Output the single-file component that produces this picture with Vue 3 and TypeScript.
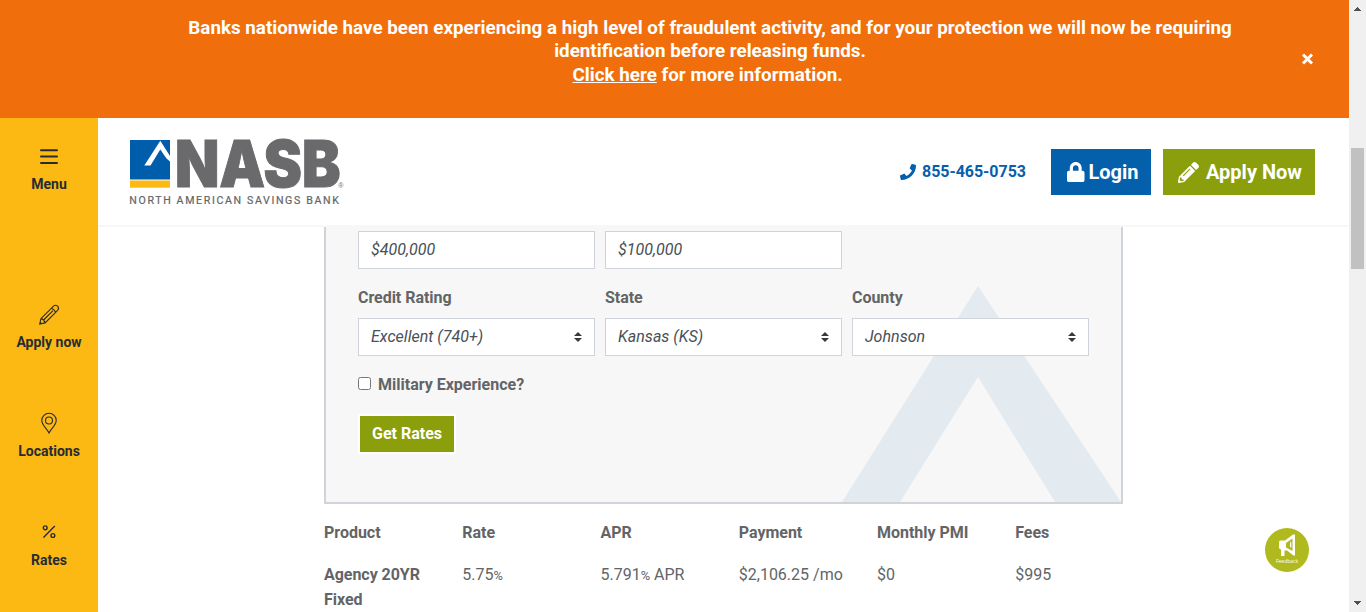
<script setup lang="ts">
interface Field {
  label: string
  value: string
}

const amounts: Field[] = [
  { label: 'Purchase price', value: '$400,000' },
  { label: 'Down payment', value: '$100,000' },
]
const selects: Field[] = [
  { label: 'Credit Rating', value: 'Excellent (740+)' },
  { label: 'State', value: 'Kansas (KS)' },
  { label: 'County', value: 'Johnson' },
]
const headings: string[] = ['Product', 'Rate', 'APR', 'Payment', 'Monthly PMI', 'Fees']
</script>

<template>
  <div class="page">
    <div class="window">
      <div class="alert">
        <p class="alert-text">
          Banks nationwide have been experiencing a high level of fraudulent activity, and for your protection we will now be requiring<br />
          identification before releasing funds.<br />
          <a class="alert-link">Click here</a> for more information.<span class="tail">&nbsp;</span>
        </p>
        <svg class="close" viewBox="0 0 12 12"><path d="M1.500 1.500L10.500 10.500M10.500 1.500L1.500 10.500" /></svg>
      </div>
      <div class="body">
        <nav class="side">
          <div class="nav-item menu">
            <svg class="nav-icon" viewBox="0 0 24 24"><path class="thick" d="M4 5.300H20M4 11.600H20M4 17.900H20" /></svg>
            <span>Menu</span>
          </div>
          <div class="nav-item">
            <svg class="nav-icon" viewBox="0 0 24 24">
              <path d="M2.700 21L3.900 15.700L16.300 3.300Q18.400 1.300 20.600 3.200Q22.500 5.300 20.600 7.400L8.100 19.900ZM14.400 5.200Q17.600 6.200 18.600 9.300M4 15.600Q7.200 16.300 8 19.700M6.600 17L16 7.600M2.900 19L4.500 20.600" />
            </svg>
            <span>Apply now</span>
          </div>
          <div class="nav-item">
            <svg class="nav-icon" viewBox="0 0 24 24">
              <path d="M12 20.900C10.200 17.200 4.800 13 4.800 8.500A7.200 7.200 0 0 1 19.200 8.500C19.200 13 13.800 17.200 12 20.900Z" />
              <circle cx="12" cy="8.500" r="3.500" />
            </svg>
            <span>Locations</span>
          </div>
          <div class="nav-item">
            <svg class="nav-icon" viewBox="0 0 24 24">
              <path class="medium" d="M6.500 16.500L17.800 5.100" />
              <circle class="medium" cx="8.200" cy="6.800" r="1.900" />
              <circle class="medium" cx="15.900" cy="14.500" r="1.900" />
            </svg>
            <span>Rates</span>
          </div>
        </nav>
        <div class="main">
          <header class="header">
            <svg class="logo" viewBox="0 0 220 70">
              <rect x="0" y="4" width="40" height="39.500" fill="#005dab" />
              <rect x="0" y="44.500" width="40" height="7.200" fill="#fdb913" />
              <path d="M14.300 29.600L30.300 4.800L40 20V25.600L36.500 22.500L30.300 13.500L20.500 29.600Z" fill="#fff" />
              <text class="logo-name" x="45" y="51" textLength="165.500" lengthAdjust="spacingAndGlyphs">NASB</text>
              <text class="logo-reg" x="208.300" y="51.500">®</text>
              <text class="logo-sub" x="-0.700" y="68" textLength="210.500" lengthAdjust="spacing">NORTH AMERICAN SAVINGS BANK</text>
            </svg>
            <div class="actions">
              <a class="phone">
                <svg class="phone-icon" viewBox="0 0 512 512"><path d="M493.4 24.6l-104-24c-11.3-2.6-22.9 3.3-27.5 13.9l-48 112c-4.2 9.8-1.4 21.3 6.9 28l60.600 49.600c-36 76.700-98.900 140.500-177.200 177.200l-49.600-60.600c-6.800-8.300-18.200-11.100-28-6.900l-112 48C3.900 366.500-2 378.100.6 389.400l24 104C27.100 504.200 36.700 512 48 512c256.100 0 464-207.500 464-464 0-11.200-7.700-20.900-18.600-23.400z" /></svg>
                <span>855-465-0753</span>
              </a>
              <a class="btn login">
                <svg class="lock-icon" viewBox="0 0 448 512"><path d="M400 224h-24v-72C376 68.200 307.800 0 224 0S72 68.200 72 152v72H48c-26.500 0-48 21.500-48 48v192c0 26.500 21.500 48 48 48h352c26.500 0 48-21.500 48-48V272c0-26.500-21.500-48-48-48zm-104 0H152v-72c0-39.700 32.300-72 72-72s72 32.300 72 72v72z" /></svg>
                <span>Login</span>
              </a>
              <a class="btn apply">
                <svg class="pencil-icon" viewBox="0 0 512 512"><path d="M497.900 142.100l-46.100 46.100c-4.700 4.700-12.300 4.700-17 0l-111-111c-4.700-4.700-4.700-12.300 0-17l46.100-46.100c18.700-18.700 49.100-18.700 67.900 0l60.100 60.100c18.800 18.700 18.800 49.100 0 67.900zM284.200 99.800L21.600 362.400.4 483.900c-2.900 16.400 11.400 30.600 27.800 27.800l121.500-21.300 262.600-262.600c4.700-4.700 4.700-12.300 0-17l-111-111c-4.800-4.700-12.400-4.700-17.100 0zM124.100 339.900c-5.500-5.500-5.500-14.300 0-19.800l154-154c5.500-5.500 14.300-5.500 19.800 0s5.500 14.300 0 19.800l-154 154c-5.500 5.500-14.300 5.500-19.800 0zM88 424h48v36.300l-64.500 11.300-31.100-31.100L51.700 376H88v48z" /></svg>
                <span>Apply Now</span>
              </a>
            </div>
          </header>
          <section class="calculator">
            <svg class="peak" viewBox="0 0 280 216"><path d="M1 216L137 0L280 216H214L137 91L59 216Z" /></svg>
            <div class="fields first">
              <div v-for="f in amounts" :key="f.label" class="control">{{ f.value }}</div>
            </div>
            <div class="fields">
              <div v-for="f in selects" :key="f.label" class="field">
                <label class="label">{{ f.label }}</label>
                <div class="control">
                  <span>{{ f.value }}</span>
                  <svg class="caret" viewBox="0 0 4 5"><path d="M2 0L0 2h4zm0 5L0 3h4z" /></svg>
                </div>
              </div>
            </div>
            <label class="check"><input type="checkbox" class="box" /><span>Military Experience?</span></label>
            <button class="get">Get Rates</button>
          </section>
          <section class="rates">
            <div class="row head"><div v-for="h in headings" :key="h">{{ h }}</div></div>
            <div class="row">
              <div class="product">Agency 20YR<br />Fixed</div>
              <div>5.75<small>%</small></div>
              <div>5.791<small>%</small> APR</div>
              <div>$2,106.25 /mo</div>
              <div>$0</div>
              <div>$995</div>
            </div>
          </section>
        </div>
      </div>
    </div>
    <div class="scrollbar">
      <svg class="arrow" viewBox="0 0 17 17"><path d="M8 7h1v1h1v1h1v1h1v1H5v-1h1V9h1V8h1z" /></svg>
      <div class="thumb"></div>
      <svg class="arrow down" viewBox="0 0 17 17"><path d="M5 6h7v1h-1v1h-1v1H9v1H8V9H7V8H6V7H5z" /></svg>
    </div>
    <div class="feedback">
      <svg viewBox="0 0 44 44">
        <path d="M14 14Q14 12.500 15.500 12.500H20L28 6.500H30V27.500H28.500L22 22.500H19.500V28H16V21.500Q14 21 14 19.500Z" fill="#fff" />
        <path d="M21 15L27.500 10.500V23L21 19.500Z" fill="#b0ba1f" />
        <path d="M25 14.500L26.300 14V19.500L25 19Z" fill="#fff" />
        <text x="22" y="35" text-anchor="middle">Feedback</text>
      </svg>
    </div>
  </div>
</template>

<style>
body { margin: 0; overflow: hidden; }
</style>

<style scoped>
* { box-sizing: border-box; }
.page { width: 1366px; height: 612px; display: flex; overflow: hidden; position: relative; background: #fff; color: #636466; font: 16px/25px Roboto, sans-serif; }
.window { width: 1349px; display: flex; flex-direction: column; }
.alert { position: relative; height: 118px; flex: none; background: #f06f0c; color: #fff; padding: 17px 0 0 71px; }
.alert-text { margin: 0; text-align: center; white-space: nowrap; font-size: 18.810px; font-weight: 700; line-height: 23.400px; }
.alert-link { text-decoration: underline; }
.close { position: absolute; left: 1301px; top: 53px; width: 13px; height: 12px; }
.close path { stroke: #fff; stroke-width: 3; stroke-linecap: butt; }
.body { display: flex; height: 494px; }
.side { width: 98px; flex: none; background: #fdb913; padding-top: 27px; }
.nav-item { height: 109px; display: flex; flex-direction: column; align-items: center; color: #262c33; font-size: 14px; font-weight: 700; line-height: 20px; }
.nav-item.menu { height: 158px; }
.nav-icon { width: 24px; height: 24px; margin-bottom: 5px; fill: none; stroke: #262c33; stroke-width: 1.100; flex: none; }
.thick { stroke-width: 2; stroke-linecap: round; }
.medium { stroke-width: 1.400; }
.main { flex: 1; overflow: hidden; }
.header { height: 109px; border-bottom: 2px solid #f7f7f7; padding: 18px 34px 0 32px; display: flex; justify-content: space-between; }
.logo { width: 220px; height: 70px; overflow: visible; }
.logo-name { font: 900 64px Inter, "Liberation Sans", sans-serif; fill: #6a6a6d; stroke: #6a6a6d; stroke-width: 1; }
.logo-sub { font: 400 10.600px Roboto, sans-serif; fill: #636466; stroke: #636466; stroke-width: .2; letter-spacing: 1px; }
.logo-reg { font: 7px "Liberation Sans", Arial, sans-serif; fill: #6a6a6d; }
.actions { display: flex; padding-top: 13px; }
.phone { width: 151px; height: 46px; display: flex; align-items: center; gap: 6px; color: #0560ac; font-weight: 700; font-size: 16px; letter-spacing: -.04px; padding-bottom: 1px; }
.phone-icon { width: 16px; height: 16px; fill: currentColor; }
.btn { height: 46px; display: flex; align-items: center; color: #fff; font-size: 20px; font-weight: 700; }
.btn svg { fill: #fff; height: 20px; }
.login { width: 100px; background: #0560ac; padding-left: 16px; gap: 4px; margin-right: 12px; }
.lock-icon { width: 17.500px; }
.apply { width: 152px; background: #8a9f0b; padding-left: 15px; gap: 7px; }
.pencil-icon { width: 21px; }
.btn.apply svg { height: 21px; }
.calculator { position: relative; width: 799px; height: 277px; margin-left: 226px; padding: 4px 32px 0; background: #f7f7f7; border: solid #ced4da; border-width: 0 2px 2px; }
.peak { position: absolute; right: 0; bottom: 0; width: 280px; height: 216px; fill: #e3eaf0; }
.fields { position: relative; display: grid; grid-template-columns: repeat(3, 237px); gap: 10px; }
.first { margin-bottom: 16px; }
.label { display: block; height: 33px; font-weight: 700; letter-spacing: -.04px; }
.control { height: 38px; display: flex; align-items: center; justify-content: space-between; background: #fff; border: 1px solid #ced4da; padding: 0 12px 2px; font-style: italic; color: #495057; letter-spacing: .03px; }
.caret { width: 8px; height: 10px; fill: #343a40; margin-top: 2px; }
.check { display: flex; align-items: center; gap: 7px; height: 25px; margin-top: 16px; font-weight: 700; }
.box { width: 13px; height: 13px; margin: 0 0 2px; }
.get { display: block; width: 98px; height: 40px; margin-top: 17px; padding: 0; border: 2px solid #fff; background: #8a9f0b; color: #fff; font: 700 16px/24px Roboto, sans-serif; }
.rates { margin: 16px 0 0 226px; width: 830px; }
.row { display: grid; grid-template-columns: repeat(6, 138.250px); }
.head { font-weight: 700; margin-bottom: 17px; letter-spacing: -.02px; }
.product { font-weight: 700; letter-spacing: -.04px; }
small { font-size: 12.800px; }
.scrollbar { width: 17px; height: 612px; background: #f0f0f0; display: flex; flex-direction: column; align-items: center; }
.arrow { width: 17px; height: 17px; fill: #505050; flex: none; }
.thumb { width: 13px; height: 121px; margin-top: 131px; background: #c1c1c1; }
.down { margin-top: auto; }
.feedback { position: absolute; left: 1265px; top: 528px; width: 44px; height: 44px; border-radius: 50%; background: #b0ba1f; }
.feedback svg { display: block; width: 44px; height: 44px; }
.feedback text { font: 5px "Open Sans", sans-serif; fill: #fff; }
</style>
